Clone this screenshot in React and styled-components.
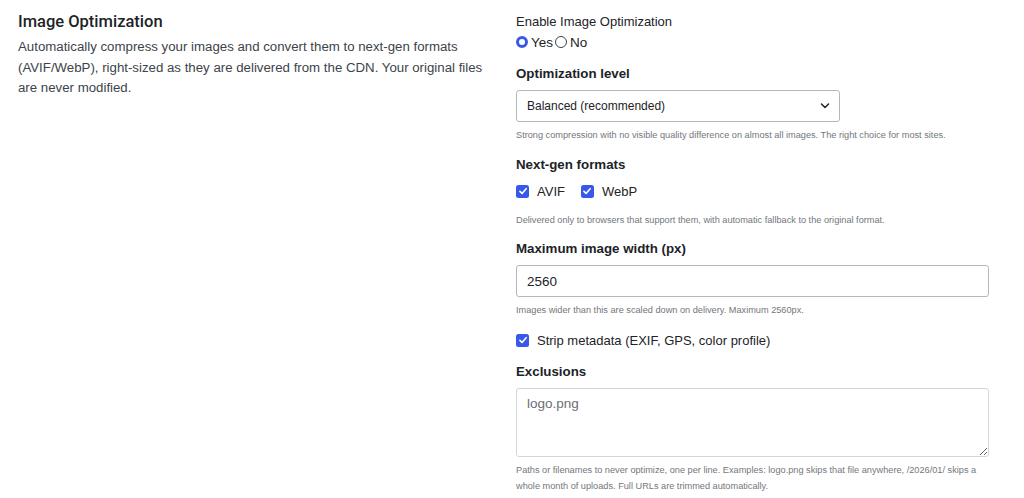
import React from "react"
import styled, { createGlobalStyle } from "styled-components"

const GlobalStyle = createGlobalStyle`
  body {
    margin: 0;
    background: #fff;
    font-family: "Liberation Sans", Arial, sans-serif;
    color: #1d2327;
  }
`

const Page = styled.div`
  display: grid;
  grid-template-columns: 473px 473px;
  column-gap: 25px;
  align-items: start;
  padding: 11px 35px 0 18px;
  height: 498px;
  box-sizing: border-box;
  overflow: hidden;
`

const Intro = styled.div``

const Title = styled.h2`
  margin: 0;
  font-family: Roboto, "Liberation Sans", sans-serif;
  font-weight: 500;
  font-size: 16.5px;
  line-height: 22px;
  color: #1d2327;
`

const Lead = styled.p`
  margin: 4px 0 0;
  max-width: 465px;
  font-size: 13.25px;
  line-height: 20.5px;
  color: #3c434a;
`

const Settings = styled.div`
  padding-top: 2px;
`

const Field = styled.div`
  margin-top: ${(p) => p.$mt || 0}px;
`

const Heading = styled.div`
  font-size: ${(p) => (p.$plain ? "13px" : "13.3px")};
  font-weight: ${(p) => (p.$plain ? 400 : 700)};
  line-height: 18px;
  color: #1d2327;
`

const RadioRow = styled.div`
  margin-top: 2px;
  display: flex;
  align-items: center;
  height: 18px;
  font-size: 13.5px;
`

const RadioOption = styled.label`
  display: flex;
  align-items: center;
  gap: 3px;
  margin-right: 2px;
`

const Radio = styled.span`
  display: inline-block;
  width: 12px;
  height: 12px;
  box-sizing: border-box;
  border-radius: 50%;
  background: #fff;
  border: ${(p) => (p.$checked ? "3.5px solid #3858e9" : "1px solid #3c434a")};
`

const SelectBox = styled.div`
  position: relative;
  margin-top: 7px;
  width: 324px;
  height: 32px;
`

const Select = styled.select`
  appearance: none;
  width: 100%;
  height: 100%;
  box-sizing: border-box;
  border: 1px solid #b4b8bd;
  border-radius: 3px;
  background: #fff;
  padding: 0 30px 0 10px;
  font-family: inherit;
  font-size: 12px;
  color: #1d2327;
`

const Chevron = styled.svg`
  position: absolute;
  right: 10px;
  top: 50%;
  margin-top: -4px;
  pointer-events: none;
`

const Help = styled.p`
  margin: ${(p) => p.$mt || 5}px 0 0;
  font-size: 9.2px;
  line-height: 16px;
  color: #72777c;
`

const CheckRow = styled.div`
  margin-top: ${(p) => p.$mt || 0}px;
  display: flex;
  align-items: center;
  height: 18px;
`

const CheckOption = styled.label`
  display: flex;
  align-items: center;
  gap: 8px;
  margin-right: 16px;
  font-size: 13px;
  color: #1d2327;
`

const Box = styled.span`
  display: grid;
  place-items: center;
  width: 13px;
  height: 13px;
  border-radius: 2.5px;
  background: #3858e9;
`

const TextInput = styled.input`
  display: block;
  margin-top: 7px;
  width: 100%;
  height: 32px;
  box-sizing: border-box;
  border: 1px solid #b4b8bd;
  border-radius: 3px;
  padding: 0 10px;
  font-family: inherit;
  font-size: 13.5px;
  color: #1d2327;
  outline: none;
`

const TextArea = styled.textarea`
  display: block;
  margin-top: 7px;
  width: 100%;
  height: 69px;
  box-sizing: border-box;
  border: 1px solid #d3d6da;
  border-radius: 3px;
  padding: 6px 10px;
  font-family: inherit;
  font-size: 13.5px;
  line-height: 18px;
  color: #6b6f75;
  resize: vertical;
  outline: none;
`

const Check = ({ label }) => (
  <CheckOption>
    <Box>
      <svg width="10" height="10" viewBox="0 0 12 12" fill="none">
        <path d="M2.3 6.4 L4.9 8.9 L9.8 3.2" stroke="#fff" strokeWidth="1.9" strokeLinecap="round" strokeLinejoin="round" />
      </svg>
    </Box>
    {label}
  </CheckOption>
)

const App = () => (
  <>
    <GlobalStyle />
    <Page>
      <Intro>
        <Title>Image Optimization</Title>
        <Lead>
          Automatically compress your images and convert them to next-gen formats (AVIF/WebP),
          right-sized as they are delivered from the CDN. Your original files are never modified.
        </Lead>
      </Intro>

      <Settings>
        <Heading $plain>Enable Image Optimization</Heading>
        <RadioRow>
          <RadioOption>
            <Radio $checked />
            Yes
          </RadioOption>
          <RadioOption>
            <Radio />
            No
          </RadioOption>
        </RadioRow>

        <Field $mt={14}>
          <Heading>Optimization level</Heading>
          <SelectBox>
            <Select defaultValue="balanced">
              <option value="balanced">Balanced (recommended)</option>
            </Select>
            <Chevron width="10" height="8" viewBox="0 0 10 8" fill="none">
              <path d="M1.5 2 L5 5.5 L8.5 2" stroke="#1d2327" strokeWidth="1.5" strokeLinecap="round" strokeLinejoin="round" />
            </Chevron>
          </SelectBox>
          <Help>
            Strong compression with no visible quality difference on almost all images. The right
            choice for most sites.
          </Help>
        </Field>

        <Field $mt={13}>
          <Heading>Next-gen formats</Heading>
          <CheckRow $mt={8}>
            <Check label="AVIF" />
            <Check label="WebP" />
          </CheckRow>
          <Help $mt={12}>
            Delivered only to browsers that support them, with automatic fallback to the original
            format.
          </Help>
        </Field>

        <Field $mt={12}>
          <Heading>Maximum image width (px)</Heading>
          <TextInput defaultValue="2560" />
          <Help>Images wider than this are scaled down on delivery. Maximum 2560px.</Help>
        </Field>

        <CheckRow $mt={13}>
          <Check label="Strip metadata (EXIF, GPS, color profile)" />
        </CheckRow>

        <Field $mt={14}>
          <Heading>Exclusions</Heading>
          <TextArea defaultValue="logo.png" />
          <Help>
            Paths or filenames to never optimize, one per line. Examples: logo.png skips that file
            anywhere, /2026/01/ skips a whole month of uploads. Full URLs are trimmed automatically.
          </Help>
        </Field>
      </Settings>
    </Page>
  </>
)

export default App
